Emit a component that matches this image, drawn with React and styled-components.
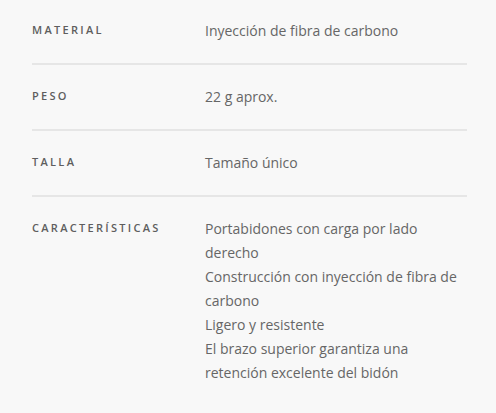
import React from 'react';
import styled, {createGlobalStyle} from 'styled-components';

const specs = [
    {label: 'Material', value: ['Inyección de fibra de carbono']},
    {label: 'Peso', value: ['22 g aprox.']},
    {label: 'Talla', value: ['Tamaño único']},
    {label: 'Características', value: [
        'Portabidones con carga por lado derecho',
        'Construcción con inyección de fibra de carbono',
        'Ligero y resistente',
        'El brazo superior garantiza una retención excelente del bidón',
    ]},
];

const App = () => {
    return (
        <>
            <GlobalStyle/>
            <Page>
                <SpecTable>
                    {specs.map((item, index) =>
                        <Row key={item.label} last={index === specs.length - 1}>
                            <Label>{item.label}</Label>
                            <Value>
                                {item.value.map(line => <Line key={line}>{line}</Line>)}
                            </Value>
                        </Row>
                    )}
                </SpecTable>
            </Page>
        </>
    );
};

export default App;


const GlobalStyle = createGlobalStyle`
    html, body {
        margin: 0;
        padding: 0;
        background: #f8f8f8;
    }
`;

const Page = styled.div`
    width: 496px;
    min-height: 413px;
    background: #f8f8f8;
    padding: 0 29px 0 32px;
    box-sizing: border-box;
`;

const SpecTable = styled.div`
    display: flex;
    flex-direction: column;
    margin-top: -1px;
`;

const Row = styled.div`
    display: grid;
    grid-template-columns: 173px 1fr;
    padding: 20px 0;
    border-bottom: ${p => p.last ? 'none' : '2px solid #e6e6e6'};
`;

const Label = styled.div`
    font-family: "Open Sans", sans-serif;
    font-size: 11px;
    font-weight: 600;
    letter-spacing: 2.3px;
    text-transform: uppercase;
    color: #5e5e5e;
    line-height: 24px;
    margin-top: -1px;
`;

const Value = styled.div`
    font-family: "Open Sans", sans-serif;
    font-size: 14px;
    color: #666;
    line-height: 24px;
    padding-right: 8px;
`;

const Line = styled.div``;
